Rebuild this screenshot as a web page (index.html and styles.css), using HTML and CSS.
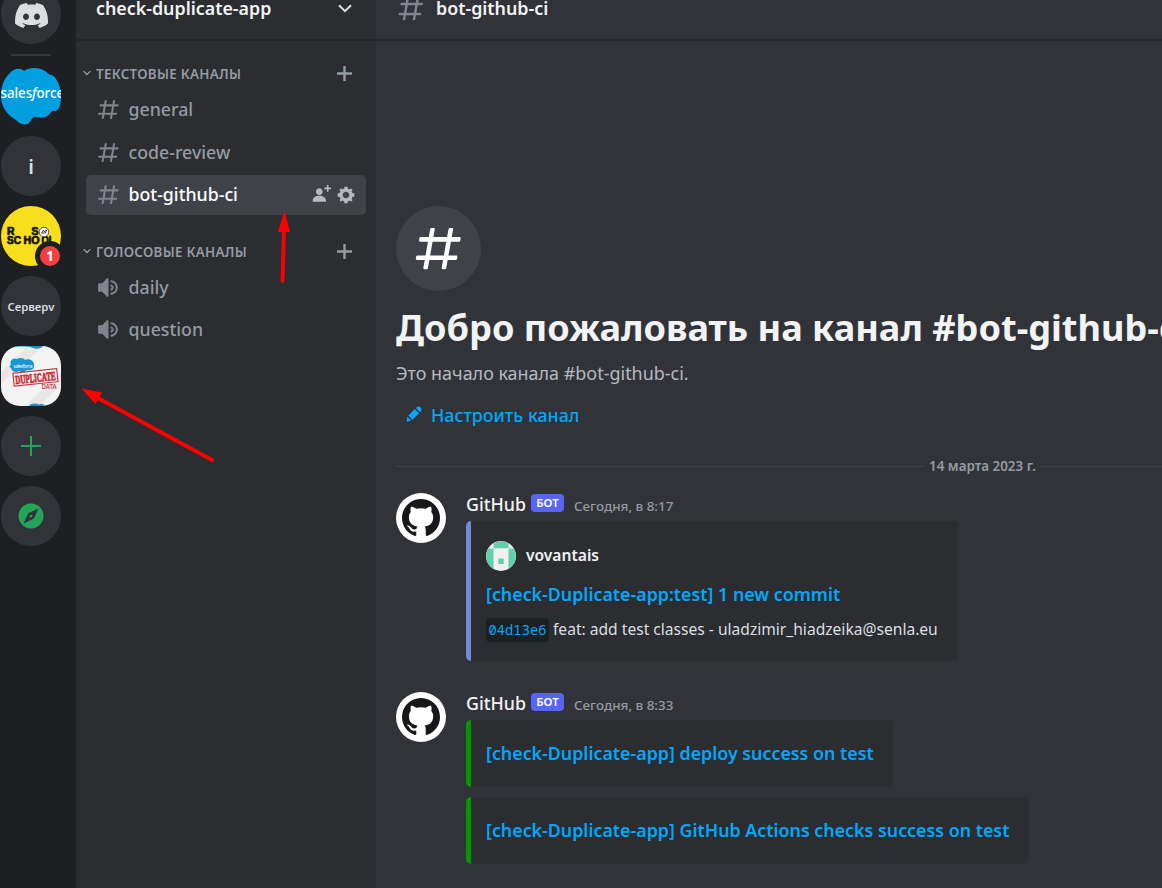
FILE: index.html
```html
<!DOCTYPE html>
<html lang="ru">
<head>
<meta charset="utf-8">
<title>check-duplicate-app</title>
<link rel="stylesheet" href="styles.css">
</head>
<body>
<svg class="defs" aria-hidden="true">
  <symbol id="hash" viewBox="0 0 24 24"><path fill="currentColor" fill-rule="evenodd" d="M5.88657 21C5.57547 21 5.3399 20.7189 5.39427 20.4126L6.00001 17H2.59511C2.28449 17 2.04905 16.7198 2.10259 16.4138L2.27759 15.4138C2.31946 15.1746 2.52722 15 2.77011 15H6.35001L7.41001 9H4.00511C3.69449 9 3.45905 8.71977 3.51259 8.41381L3.68759 7.41381C3.72946 7.17456 3.93722 7 4.18011 7H7.76001L8.39677 3.41262C8.43914 3.17391 8.64664 3 8.88907 3H9.87344C10.1845 3 10.4201 3.28107 10.3657 3.58738L9.76001 7H15.76L16.3968 3.41262C16.4391 3.17391 16.6466 3 16.8891 3H17.8734C18.1845 3 18.4201 3.28107 18.3657 3.58738L17.76 7H21.1649C21.4755 7 21.711 7.28023 21.6574 7.58619L21.4824 8.58619C21.4406 8.82544 21.2328 9 20.9899 9H17.41L16.35 15H19.7549C20.0655 15 20.301 15.2802 20.2474 15.5862L20.0724 16.5862C20.0306 16.8254 19.8228 17 19.5799 17H16L15.3632 20.5874C15.3209 20.8261 15.1134 21 14.8709 21H13.8866C13.5755 21 13.3399 20.7189 13.3943 20.4126L14 17H8.00001L7.36325 20.5874C7.32088 20.8261 7.11337 21 6.87094 21H5.88657ZM9.41045 9L8.35045 15H14.3504L15.4104 9H9.41045Z"/></symbol>
  <symbol id="speaker" viewBox="0 0 24 24"><path fill="currentColor" fill-rule="evenodd" d="M11.383 3.07904C11.009 2.92504 10.579 3.01004 10.293 3.29604L6 8.00204H3C2.45 8.00204 2 8.45304 2 9.00204V15.002C2 15.552 2.45 16.002 3 16.002H6L10.293 20.71C10.579 20.996 11.009 21.082 11.383 20.927C11.757 20.772 12 20.407 12 20.002V4.00204C12 3.59904 11.757 3.23204 11.383 3.07904ZM14 5.00195V7.00195C16.757 7.00195 19 9.24595 19 12.002C19 14.759 16.757 17.002 14 17.002V19.002C17.86 19.002 21 15.863 21 12.002C21 8.14295 17.86 5.00195 14 5.00195ZM14 9.00195C15.654 9.00195 17 10.349 17 12.002C17 13.657 15.654 15.002 14 15.002V13.002C14.551 13.002 15 12.553 15 12.002C15 11.451 14.551 11.002 14 11.002V9.00195Z"/></symbol>
  <symbol id="plus" viewBox="0 0 15 15"><path fill="currentColor" d="M6.3 0h2.4v6.3H15v2.4H8.7V15H6.3V8.700H0V6.300h6.300z"/></symbol>
  <symbol id="fold" viewBox="0 0 8 6"><path fill="none" stroke="currentColor" stroke-width="1.3" d="M.6 1.100 4 4.500 7.400 1.100"/></symbol>
  <symbol id="octocat" viewBox="0 0 16 16"><path fill="#18171a" d="M8 0C3.58 0 0 3.58 0 8c0 3.540 2.290 6.530 5.470 7.590.4.070.550-.170.550-.380 0-.190-.010-.820-.010-1.490-2.010.370-2.530-.490-2.690-.940-.090-.230-.480-.940-.820-1.130-.280-.150-.680-.520-.010-.530.630-.010 1.080.580 1.230.820.720 1.210 1.870.870 2.330.660.070-.520.280-.870.510-1.070-1.780-.2-3.640-.890-3.640-3.950 0-.870.310-1.590.820-2.150-.080-.2-.360-1.020.080-2.120 0 0 .670-.210 2.2.820.640-.180 1.320-.270 2-.270.680 0 1.360.090 2 .270 1.530-1.040 2.200-.820 2.200-.820.440 1.100.160 1.920.080 2.120.510.560.820 1.270.820 2.150 0 3.070-1.870 3.750-3.650 3.950.290.250.540.730.540 1.480 0 1.070-.010 1.930-.010 2.200 0 .210.150.460.550.380A8.013 8.013 0 0016 8c0-4.420-3.580-8-8-8z"/></symbol>
</svg>

<div class="app">
  <nav class="servers">
    <div class="server home">
      <svg class="home-logo" viewBox="0 0 28 20" preserveAspectRatio="none"><path fill="#dbdee1" fill-rule="evenodd" d="M23.7187 1.67497C21.9061 0.89249 19.9681 0.323786 17.942 0C17.6932 0.41511 17.4025 0.973432 17.2021 1.41757C15.0482 1.11872 12.9142 1.11872 10.8 1.41757C10.5996 0.973432 10.3023 0.41511 10.0513 0C8.02293 0.323786 6.08271 0.894565 4.27023 1.67912C0.61443 6.77668 -0.376613 11.7477 0.118905 16.648C2.54363 18.3188 4.89347 19.3337 7.20363 19.9979C7.77402 19.2736 8.28275 18.5036 8.721 17.6922C7.88634 17.3997 7.08691 17.0386 6.33154 16.6194C6.53193 16.4824 6.72796 16.3392 6.91733 16.1918C11.5244 18.1913 16.5302 18.1913 21.0823 16.1918C21.2739 16.3392 21.4699 16.4824 21.6681 16.6194C20.9106 17.0407 20.1089 17.4018 19.2743 17.6943C19.7125 18.5036 20.2191 19.2757 20.7916 20C23.104 19.3358 25.456 18.3209 27.8807 16.648C28.4622 10.9672 26.8875 6.04176 23.7187 1.67497ZM9.34871 13.6343C7.96567 13.6343 6.83149 12.4429 6.83149 10.9922C6.83149 9.54132 7.94144 8.34791 9.34871 8.34791C10.756 8.34791 11.8902 9.53924 11.866 10.9922C11.8682 12.4429 10.756 13.6343 9.34871 13.6343ZM18.6512 13.6343C17.2682 13.6343 16.134 12.4429 16.134 10.9922C16.134 9.54132 17.2439 8.34791 18.6512 8.34791C20.0585 8.34791 21.1927 9.53924 21.1685 10.9922C21.1685 12.4429 20.0585 13.6343 18.6512 13.6343Z"/></svg>
    </div>
    <div class="divider"></div>
    <svg class="server-art" viewBox="0 0 60 60">
      <path fill="#009fe0" d="M8 8C11 4 16 2 19 3 21 3 22 4 23 5 28 1 38 1 44 5 46 6 48 9 50 9 54 9 60 19 60 30 60 38 58 45 54 45 52 45 52 44 50 46 47 51 42 53 36 51 32 50 31 53 28 57 25 60 18 58 15 54 5 48 0 40 0 30 0 20 3 13 8 8Z"/>
      <text class="sf-word" x="-.5" y="32" textLength="63.500" lengthAdjust="spacingAndGlyphs">sales<tspan font-style="italic">f</tspan>orce</text>
    </svg>
    <div class="server letter">i</div>
    <div class="server-wrap">
      <svg class="server-art" viewBox="0 0 60 60">
        <circle cx="30" cy="30" r="30" fill="#f7df1e"/>
        <g class="rs-word"><text x="6" y="28.500">R</text><text x="30.500" y="28.500">S</text><text x="6" y="37.800" textLength="14" lengthAdjust="spacingAndGlyphs">SC</text><text x="22.500" y="37.800" textLength="16" lengthAdjust="spacingAndGlyphs">HO</text><text x="40.500" y="37.800" textLength="13" lengthAdjust="spacingAndGlyphs">OL</text></g>
        <circle cx="43" cy="26" r="4.800" fill="#fff" stroke="#333" stroke-width=".8"/>
        <path d="m40.500 27 2-3 1 2 2-2-1 3z" fill="none" stroke="#222" stroke-width=".8"/>
      </svg>
      <span class="badge">1</span>
    </div>
    <div class="server small">Серверv</div>
    <svg class="server-art squircle" viewBox="0 0 60 60">
      <rect width="60" height="60" fill="#f3f3f3"/>
      <path fill="#e7e7e8" d="M0 26 27 0H42L0 38zM24 60 60 26V39L38 60z"/>
      <path fill="#1b91c8" d="M6 0H42C40 2.500 36 3.500 32 2 26 0 16 0 8 2.500zM28 60C30 57 35 57 38 58.500 40 57.500 43 58 44 60z"/>
      <path fill="#1798d4" d="M10 19C8 15 12 11 16 13 19 11 23 12 24 14 28 12 34 15 33 20 33 24 29 25 26 24 24 27 20 27 18 25 15 27 11 26 10 22 8 21 8 20 10 19Z"/>
      <text class="dup-cloud" x="12.500" y="21.500" textLength="19">salesforce</text>
      <g transform="rotate(-6 34 32)"><rect x="12.500" y="25" width="44" height="13" fill="#f7efef" stroke="#c62f38" stroke-width="1.100"/><text class="dup-word" x="14.200" y="36" textLength="40.500" lengthAdjust="spacingAndGlyphs">DUPLICATE</text></g>
      <text class="dup-data" x="40.500" y="42.500" textLength="15" lengthAdjust="spacingAndGlyphs">DATA</text>
    </svg>
    <div class="server"><svg class="add" viewBox="0 0 20 20"><path fill="#23a559" d="M9 0h2v9h9v2h-9v9H9v-9H0V9h9z"/></svg></div>
    <div class="server"><svg class="compass" viewBox="0 0 24 24"><path fill="#23a559" d="M12 10.900C11.390 10.900 10.900 11.390 10.900 12C10.900 12.610 11.390 13.100 12 13.100C12.610 13.100 13.100 12.610 13.100 12C13.100 11.390 12.610 10.900 12 10.900ZM12 2C6.480 2 2 6.480 2 12C2 17.520 6.480 22 12 22C17.520 22 22 17.520 22 12C22 6.480 17.520 2 12 2ZM14.190 14.190L6 18L9.810 9.810L18 6L14.190 14.190Z"/></svg></div>
  </nav>

  <aside class="channels">
    <header class="guild-head"><span class="t guild-name">check-duplicate-app</span>
      <svg class="chevron" viewBox="0 0 14 9"><path fill="none" stroke="#dbdee1" stroke-width="2" d="m1 1.200 6 6 6-6"/></svg></header>
    <div class="category"><svg class="fold"><use href="#fold"/></svg><span class="t">ТЕКСТОВЫЕ КАНАЛЫ</span><svg class="plus"><use href="#plus"/></svg></div>
    <div class="channel-list">
      <div class="channel"><svg class="ch-icon"><use href="#hash"/></svg><span class="t">general</span></div>
      <div class="channel"><svg class="ch-icon"><use href="#hash"/></svg><span class="t">code-review</span></div>
      <div class="channel selected"><svg class="ch-icon"><use href="#hash"/></svg><span class="t">bot-github-ci</span>
        <span class="tools">
          <svg viewBox="0 0 24 24"><path fill="currentColor" d="M21 3H24V5H21V8H19V5H16V3H19V0H21V3ZM10 12C12.205 12 14 10.205 14 8C14 5.795 12.205 4 10 4C7.795 4 6 5.795 6 8C6 10.205 7.795 12 10 12ZM10 13C5.289 13 2 15.467 2 19V20H18V19C18 15.467 14.711 13 10 13Z"/></svg>
          <svg viewBox="0 0 24 24"><path fill="currentColor" fill-rule="evenodd" d="M19.738 10H22V14H19.739C19.498 14.931 19.1 15.798 18.565 16.564L20 18L18 20L16.565 18.564C15.797 19.099 14.932 19.498 14 19.738V22H10V19.738C9.069 19.498 8.203 19.099 7.436 18.564L6 20L4 18L5.436 16.564C4.901 15.799 4.502 14.932 4.262 14H2V10H4.262C4.502 9.068 4.9 8.202 5.436 7.436L4 6L6 4L7.436 5.436C8.202 4.9 9.068 4.502 10 4.262V2H14V4.261C14.932 4.502 15.797 4.9 16.565 5.435L18 3.999L20 5.999L18.564 7.436C19.099 8.202 19.498 9.069 19.738 10ZM12 16C14.2091 16 16 14.2091 16 12C16 9.79086 14.2091 8 12 8C9.79086 8 8 9.79086 8 12C8 14.2091 9.79086 16 12 16Z"/></svg>
        </span></div>
    </div>
    <div class="category voice"><svg class="fold"><use href="#fold"/></svg><span class="t">ГОЛОСОВЫЕ КАНАЛЫ</span><svg class="plus"><use href="#plus"/></svg></div>
    <div class="channel-list voice-list">
      <div class="channel"><svg class="ch-icon"><use href="#speaker"/></svg><span class="t">daily</span></div>
      <div class="channel"><svg class="ch-icon"><use href="#speaker"/></svg><span class="t">question</span></div>
    </div>
  </aside>

  <main class="chat">
    <header class="chat-head"><svg class="head-icon"><use href="#hash"/></svg><span class="t chat-name">bot-github-ci</span></header>
    <section class="welcome">
      <div class="big-hash"><svg><use href="#hash"/></svg></div>
      <h1>Добро пожаловать на канал #bot-github-ci!</h1>
      <p class="intro"><span class="t">Это начало канала #bot-github-ci.</span></p>
      <a class="setup"><svg viewBox="0 0 24 24"><path fill="currentColor" d="M19.2929 9.8299L19.9409 9.18278C21.353 7.77064 21.353 5.47197 19.9409 4.05892C18.5287 2.64678 16.2292 2.64678 14.817 4.05892L14.1699 4.70694L19.2929 9.8299ZM12.8962 5.97688L5.18469 13.6906L10.3085 18.813L18.0201 11.0992L12.8962 5.97688ZM4.11851 20.9704L8.75906 19.8112L4.18692 15.239L3.02678 19.8796C2.95028 20.1856 3.04028 20.5105 3.26349 20.7337C3.48669 20.9569 3.8116 21.046 4.11851 20.9704Z"/></svg><span class="t">Настроить канал</span></a>
    </section>
    <div class="date-line"><span class="t">14 марта 2023 г.</span></div>

    <article class="message">
      <div class="avatar"><svg><use href="#octocat"/></svg></div>
      <div class="body">
        <div class="meta"><span class="t author">GitHub</span><span class="bot">БОТ</span><span class="t time">Сегодня, в 8:17</span></div>
        <div class="embed commit">
          <div class="who"><svg viewBox="0 0 30 30"><circle cx="15" cy="15" r="15" fill="#f0f0f0"/><path fill="#5fd0a9" d="M7.500 2.300a15 15 0 0 1 15 0V7.300h-15zM2.300 7.500H7.500V27.800A15 15 0 0 1 2.300 7.500zM27.700 7.500H22.500V27.800A15 15 0 0 0 27.700 7.500zM12.300 17.500h5.400v5.400h-5.400z"/></svg><span class="t">vovantais</span></div>
          <a class="title"><span class="t">[check-Duplicate-app:test] 1 new commit</span></a>
          <p class="desc"><code>04d13e6</code><span class="t">feat: add test classes - uladzimir_hiadzeika@senla.eu</span></p>
        </div>
      </div>
    </article>

    <article class="message second">
      <div class="avatar"><svg><use href="#octocat"/></svg></div>
      <div class="body">
        <div class="meta"><span class="t author">GitHub</span><span class="bot">БОТ</span><span class="t time">Сегодня, в 8:33</span></div>
        <div class="embed deploy"><a class="title"><span class="t">[check-Duplicate-app] deploy success on test</span></a></div>
        <div class="embed checks"><a class="title"><span class="t">[check-Duplicate-app] GitHub Actions checks success on test</span></a></div>
      </div>
    </article>
  </main>
</div>

<svg class="arrows" viewBox="0 0 1162 888">
  <path d="M282.500 281 284 228M212 460 96 397" stroke="#f00" stroke-width="3.800" stroke-linecap="round"/>
  <path fill="#f00" d="M284.500 211 290 232H278zM81.500 388.500 102 392.500 95.500 404z"/>
</svg>
</body>
</html>
```
FILE: styles.css
```css
* { box-sizing: border-box; }
body { margin: 0; background: #313338; font-family: "Noto Sans", sans-serif; overflow: hidden; }
svg { display: block; flex: none; }
h1, p { margin: 0; }
.t { white-space: nowrap; }
.defs { display: none; }
.app { display: flex; width: 1162px; height: 888px; overflow: hidden; }

.servers { width: 76px; flex: none; background: #1e1f22; padding-left: 1px; display: flex; flex-direction: column; gap: 10px; margin-top: -16px; }
.server { width: 60px; height: 60px; flex: none; border-radius: 50%; background: #313338; color: #dbdee1; display: flex; align-items: center; justify-content: center; }
.home-logo { width: 33px; height: 25px; margin-top: 2px; }
.divider { width: 40px; height: 2px; flex: none; background: #35363c; margin-left: 10px; }
.server-art { width: 60px; height: 60px; }
.sf-word { fill: #fff; font-size: 13.500px; font-weight: 500; }
.letter { font-size: 20px; font-weight: 600; }
.small { font-size: 11.300px; font-weight: 600; }
.server-wrap { position: relative; }
.rs-word { font: 900 10.500px "Liberation Sans", sans-serif; fill: #111; stroke: #111; stroke-width: .7; }
.badge { position: absolute; left: 34px; bottom: -5px; width: 30px; height: 30px; border: 5px solid #1e1f22; border-radius: 50%; background: #f23f42; color: #fff; font-size: 14px; font-weight: 700; line-height: 20px; text-align: center; }
.squircle { border-radius: 19px; }
.dup-cloud { font-size: 4.500px; fill: #fff; }
.dup-word { font: 700 12px "Liberation Serif", serif; fill: #c62f38; stroke: #c62f38; stroke-width: .8; }
.dup-data { font-size: 6.500px; font-weight: 500; fill: #c62f38; }
.add { width: 20px; height: 20px; }
.compass { width: 30px; height: 30px; }

.channels { width: 300px; flex: none; background: #2b2d31; color: #949ba4; }
.guild-head { height: 41px; border-bottom: 2px solid #232428; padding: 0 24px 0 20px; display: flex; align-items: flex-start; justify-content: space-between; color: #f2f3f5; }
.guild-name { font-size: 17.850px; font-weight: 600; line-height: 16px; }
.chevron { width: 14px; height: 9px; margin-top: 4px; }
.category { height: 28px; margin-top: 18px; padding: 0 24px 0 7px; display: flex; align-items: center; font-size: 13.400px; font-weight: 600; letter-spacing: .3px; }
.category .t { padding-top: 1px; }
.fold { width: 8px; height: 6px; margin-right: 5px; }
.plus { width: 15px; height: 15px; margin-left: auto; }
.channel-list { display: flex; flex-direction: column; gap: 2.500px; padding: 3px 10px 0; }
.channel { height: 40px; border-radius: 5px; padding: 0 10px; display: flex; align-items: center; font-size: 17.750px; font-weight: 500; }
.channel .t { padding-bottom: 2px; }
.ch-icon { width: 25px; height: 25px; margin: 0 7.500px 1px 0; color: #80848e; }
.selected { background: #404249; color: #fff; }
.tools { display: flex; gap: 5px; margin-left: auto; color: #b5bac1; }
.tools svg { width: 20px; height: 20px; }
.voice { margin-top: 22px; }
.voice-list { gap: 2px; }

.chat { flex: 1; min-width: 0; color: #dbdee1; }
.chat-head { height: 41px; border-bottom: 2px solid #27282c; padding-left: 20px; display: flex; }
.head-icon { width: 30px; height: 30px; margin: -6px 10px 0 0; color: #80848e; }
.chat-name { font-size: 17.850px; font-weight: 600; line-height: 16px; color: #f2f3f5; }
.welcome { padding: 165px 0 0 20px; }
.big-hash { width: 85px; height: 85px; border-radius: 50%; background: #404249; color: #fff; display: flex; align-items: center; justify-content: center; }
.big-hash svg { width: 55px; height: 55px; }
h1 { font-size: 36.120px; font-weight: 700; line-height: 50px; margin-top: 11px; color: #f2f3f5; white-space: nowrap; }
.intro { margin-top: 9px; font-size: 17.950px; line-height: 25px; color: #b5bac1; }
.setup { display: flex; align-items: center; height: 40px; margin-top: 9px; padding-left: 8px; gap: 7px; color: #00a8fc; font-size: 17.800px; font-weight: 500; }
.setup svg { width: 20px; height: 20px; margin-top: -3px; }
.date-line { display: flex; align-items: center; height: 20px; margin: 21px 0 0 20px; width: 1173px; color: #949ba4; font-size: 13.400px; font-weight: 600; }
.date-line::before, .date-line::after { content: ""; flex: 1; height: 1px; background: #3f4147; }
.date-line .t { padding: 0 5px 1px; }
.message { display: flex; gap: 20px; padding-left: 20px; margin-top: 17px; }
.second { margin-top: 31px; }
.avatar { width: 50px; height: 50px; flex: none; border-radius: 50%; background: #fff; display: flex; align-items: center; justify-content: center; }
.avatar svg { width: 38px; height: 38px; }
.meta { display: flex; align-items: center; height: 22px; margin-bottom: 6px; }
.author { font-size: 17.800px; font-weight: 500; color: #f2f3f5; }
.bot { margin: -2px 10px 0 5px; width: 33px; height: 18px; border-radius: 4px; background: #5865f2; color: #fff; font-size: 11.500px; font-weight: 600; line-height: 18px; text-align: center; }
.time { color: #949ba4; font-size: 13.400px; font-weight: 500; margin-top: 3px; }
.embed { border-left: 5px solid #7289da; border-radius: 5px; background: #2b2d31; padding: 0 20px 0 15px; }
.commit { height: 140px; width: 492px; padding-top: 20px; }
.deploy, .checks { height: 67px; border-color: #009800; display: flex; align-items: center; padding-bottom: 2px; }
.deploy { width: 427px; }
.checks { width: 563px; margin-top: 10px; }
.who { display: flex; align-items: center; gap: 10px; height: 30px; color: #f2f3f5; font-size: 15.600px; font-weight: 600; }
.who .t { padding-bottom: 2px; }
.who svg { width: 30px; height: 30px; }
.title { display: block; color: #00a8fc; font-size: 17.830px; font-weight: 600; line-height: 24px; }
.commit .title { margin-top: 11px; }
.desc { display: flex; align-items: center; gap: 4px; margin-top: 11px; font-size: 15.600px; line-height: 24px; }
.desc .t { padding-bottom: 2px; }
code { width: 63px; height: 24px; border-radius: 4px; background: #1e1f22; color: #00a8fc; font: 13.800px/24px "Noto Sans Mono", "DejaVu Sans Mono", monospace; text-align: center; }

.arrows { position: absolute; left: 0; top: 0; width: 1162px; height: 888px; }
```
